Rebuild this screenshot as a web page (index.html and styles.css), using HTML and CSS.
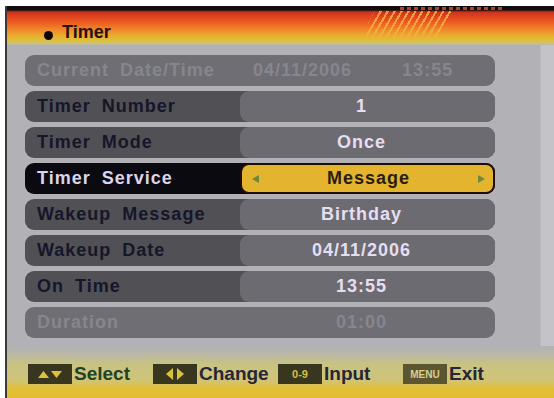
FILE: index.html
```html
<!DOCTYPE html>
<html>
<head>
<meta charset="utf-8">
<link rel="stylesheet" href="styles.css">
</head>
<body>
<div class="screen">
  <div class="header">
    <span class="dashes"></span>
    <span class="stripes"></span>
    <h1 class="title"><span class="dot"></span>Timer</h1>
  </div>
  <div class="rows">
    <div class="row disabled">
      <span class="label">Current Date/Time</span>
      <span class="value value-left"><span>04/11/2006</span><span>13:55</span></span>
    </div>
    <div class="row">
      <span class="label">Timer Number</span>
      <span class="value">1</span>
    </div>
    <div class="row">
      <span class="label">Timer Mode</span>
      <span class="value">Once</span>
    </div>
    <div class="row active">
      <span class="label">Timer Service</span>
      <span class="value">
        <svg class="arrow" width="7" height="8" viewBox="0 0 7 8"><path d="M7 0 L0 4 L7 8 Z"/></svg>
        <span class="value-text">Message</span>
        <svg class="arrow" width="7" height="8" viewBox="0 0 7 8"><path d="M0 0 L7 4 L0 8 Z"/></svg>
      </span>
    </div>
    <div class="row">
      <span class="label">Wakeup Message</span>
      <span class="value">Birthday</span>
    </div>
    <div class="row">
      <span class="label">Wakeup Date</span>
      <span class="value">04/11/2006</span>
    </div>
    <div class="row">
      <span class="label">On Time</span>
      <span class="value">13:55</span>
    </div>
    <div class="row disabled">
      <span class="label">Duration</span>
      <span class="value">01:00</span>
    </div>
  </div>
  <div class="footer">
    <div class="hint">
      <span class="key">
        <svg width="26" height="8" viewBox="0 0 26 8"><path d="M1 8 L6.5 1 L12 8 Z"/><path d="M14 1 L25 1 L19.5 8 Z"/></svg>
      </span>
      <span class="hint-text select">Select</span>
    </div>
    <div class="hint">
      <span class="key">
        <svg width="20" height="12" viewBox="0 0 20 12"><path d="M8 0 L1 6 L8 12 Z"/><path d="M12 0 L19 6 L12 12 Z"/></svg>
      </span>
      <span class="hint-text">Change</span>
    </div>
    <div class="hint">
      <span class="key key-text">0-9</span>
      <span class="hint-text">Input</span>
    </div>
    <div class="hint">
      <span class="key key-text key-menu">MENU</span>
      <span class="hint-text">Exit</span>
    </div>
  </div>
</div>
</body>
</html>
```

FILE: styles.css
```css
html, body {
  margin: 0;
  padding: 0;
  background: #ffffff;
}

body {
  width: 554px;
  height: 398px;
  overflow: hidden;
  font-family: "Liberation Sans", Arial, sans-serif;
}

.screen {
  margin: 6px 0 0 5px;
  width: 547px;
  height: 392px;
  border-left: 2px solid #3a3a3c;
  background: linear-gradient(to right, #b2b2b6 0, #b2b2b6 533px, #c4c4c8 534px);
  display: flex;
  flex-direction: column;
}

.header {
  position: relative;
  height: 39px;
  flex: none;
  background: linear-gradient(to bottom,
    #0e0c0c 0, #141010 4px, #c83420 6px, #e0401e 10px,
    #ec6022 17px, #f08a2a 24px, #e8ae30 30px, #dcc23a 35px,
    #c8c090 38px, #b2b2b6 39px);
}

.dashes {
  position: absolute;
  left: 393px;
  top: 1px;
  width: 104px;
  height: 3px;
  background: repeating-linear-gradient(90deg, #b04428 0 4px, transparent 4px 7px);
}

.stripes {
  position: absolute;
  left: 352px;
  top: 5px;
  width: 94px;
  height: 28px;
  background: repeating-linear-gradient(120deg, #f4b040 0 2px, transparent 2px 6px);
  clip-path: polygon(16px 0, 94px 0, 78px 28px, 0 28px);
  opacity: 0.85;
}

.title {
  margin: 0;
  padding: 16px 0 0 37px;
  display: flex;
  align-items: center;
  font-size: 18px;
  font-weight: bold;
  color: #2a100a;
  line-height: 20px;
}

.dot {
  width: 9px;
  height: 9px;
  border-radius: 50%;
  background: #0a0808;
  margin: 6px 9px 0 0;
}

.rows {
  padding: 10px 0 0 18px;
  display: flex;
  flex-direction: column;
  gap: 5px;
  flex: none;
}

.row {
  width: 470px;
  height: 31px;
  border-radius: 9px;
  background: #505055;
  display: flex;
  font-size: 18px;
  font-weight: bold;
  letter-spacing: 1px;
}

.label {
  box-sizing: border-box;
  width: 215px;
  padding-left: 12px;
  display: flex;
  align-items: center;
  color: #16162a;
  word-spacing: 5px;
}

.value {
  flex: 1;
  border-radius: 9px;
  background: #6b6b71;
  display: flex;
  align-items: center;
  justify-content: center;
  color: #e6def0;
  padding-right: 12px;
}

.row.disabled {
  background: #6e6e74;
}

.row.disabled .label,
.row.disabled .value {
  color: #86868f;
  background: transparent;
}

.value-left {
  justify-content: flex-start;
  gap: 50px;
  padding-left: 13px;
}

.row.active {
  background: #0a0a10;
}

.row.active .label {
  color: #dcd4ec;
}

.row.active .value {
  background: #e4b42e;
  border: 2px solid #1c0e0a;
  border-radius: 9px;
  color: #2a1c10;
  justify-content: space-between;
  padding: 0 8px 0 10px;
}

.arrow {
  fill: #6c8a3c;
}

.footer {
  margin-top: 8px;
  flex: 1;
  box-sizing: border-box;
  padding: 18px 0 0 21px;
  display: grid;
  grid-template-columns: repeat(4, 125px);
  align-items: start;
  background: linear-gradient(to bottom,
    #b2b2b6 0, #bab8a6 8px, #c8c282 18px, #d0c478 34px,
    #dcc24a 40px, #e2c034 43px, #e0be30 100%);
}

.hint {
  display: flex;
  align-items: center;
  height: 20px;
}

.key {
  width: 44px;
  height: 20px;
  background: #38361f;
  display: flex;
  align-items: center;
  justify-content: center;
  fill: #dcc23c;
  flex: none;
}

.key-text {
  font-size: 11px;
  font-weight: bold;
  color: #d4c040;
}

.key-menu {
  background: #5c5630;
  color: #d8d090;
  font-size: 10px;
}

.hint-text {
  margin-left: 2px;
  font-size: 19px;
  font-weight: bold;
  color: #262636;
  line-height: 20px;
}

.hint-text.select {
  color: #1e4428;
}
```
